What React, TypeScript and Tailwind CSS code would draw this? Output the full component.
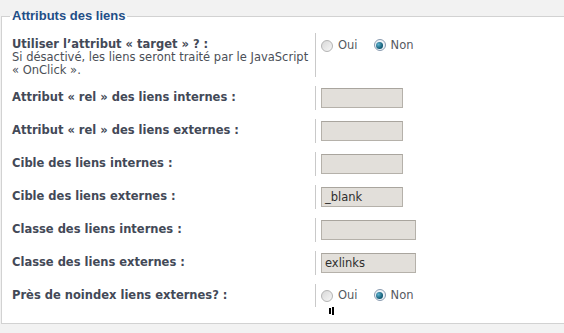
import React from 'react';

const FONT = "font-['DejaVu_Sans',Verdana,sans-serif]";

function Radio({ checked }: { checked?: boolean }) {
  return (
    <span
      className={`inline-flex h-[12px] w-[12px] items-center justify-center rounded-full border ${
        checked
          ? 'border-[#8a9bb0] bg-[#eef3f8]'
          : 'border-[#b4b4b4] bg-gradient-to-br from-[#d8d8d8] to-[#f6f6f6]'
      }`}
    >
      {checked && (
        <span className="h-[7px] w-[7px] rounded-full bg-[radial-gradient(circle_at_35%_35%,#5fb3cf,#0e5670_70%)]" />
      )}
    </span>
  );
}

function YesNo({ value }: { value: boolean }) {
  return (
    <div className="flex items-center h-[19px] text-[11.5px] text-[#55595f]">
      <Radio checked={value} />
      <span className="ml-[5px]">Oui</span>
      <span className="ml-[16px]">
        <Radio checked={!value} />
      </span>
      <span className="ml-[5px]">Non</span>
    </div>
  );
}

function TextBox({ value, wide }: { value?: string; wide?: boolean }) {
  return (
    <div
      className={`h-[20px] ${
        wide ? 'w-[95px]' : 'w-[82px]'
      } border border-[#b5b1aa] border-t-[#a9a59e] bg-[#e2dfda] px-[3px] text-[11.5px] leading-[18px] text-[#2e2e2e]`}
    >
      {value}
    </div>
  );
}

function Row({
  label,
  children,
  top,
}: {
  label: React.ReactNode;
  children: React.ReactNode;
  top?: boolean;
}) {
  return (
    <div className="flex">
      <div className="w-[305px] shrink-0 pl-[2px] pt-[5px] text-[11.5px] leading-[13px]">
        {label}
      </div>
      <div
        className={`border-l border-[#c9c9c9] pl-[5px] ${
          top ? 'pt-[2px]' : 'py-[2px]'
        }`}
      >
        {children}
      </div>
    </div>
  );
}

export default function App() {
  const bold = 'font-bold text-[#434957]';
  return (
    <div className={`${FONT} min-h-[333px] w-[564px] overflow-hidden bg-[#f2f2f2] pt-[8px]`}>
      <fieldset className="ml-px w-[600px] border border-r-0 border-[#d2d2d2] bg-white px-[8px] pb-[8px]">
        <legend className="px-[2px] font-['Liberation_Sans',Arial,sans-serif] text-[13px] font-bold leading-[16px] text-[#1f4e87]">
          Attributs des liens
        </legend>
        <div className="mt-[9px] flex flex-col gap-[9px]">
          <Row
            top
            label={
              <>
                <div className={bold}>Utiliser l’attribut « target » ? :</div>
                <div className="text-[#4b4f57]">
                  Si désactivé, les liens seront traité par le JavaScript
                  <br />« OnClick ».
                </div>
              </>
            }
          >
            <div className="h-[40px] pt-[1px]">
              <YesNo value={false} />
            </div>
          </Row>
          <Row label={<span className={bold}>Attribut « rel » des liens internes :</span>}>
            <TextBox />
          </Row>
          <Row label={<span className={bold}>Attribut « rel » des liens externes :</span>}>
            <TextBox />
          </Row>
          <Row label={<span className={bold}>Cible des liens internes :</span>}>
            <TextBox />
          </Row>
          <Row label={<span className={bold}>Cible des liens externes :</span>}>
            <TextBox value="_blank" />
          </Row>
          <Row label={<span className={bold}>Classe des liens internes :</span>}>
            <TextBox wide />
          </Row>
          <Row label={<span className={bold}>Classe des liens externes :</span>}>
            <TextBox wide value="exlinks" />
          </Row>
          <Row label={<span className={bold}>Près de noindex liens externes? :</span>}>
            <YesNo value={false} />
          </Row>
        </div>
        <div className="ml-[319px] flex h-[8px] gap-[1px]">
          <span className="mt-[1px] h-[6px] w-[2px] bg-black" />
          <span className="h-[8px] w-[2px] bg-black" />
        </div>
      </fieldset>
    </div>
  );
}
